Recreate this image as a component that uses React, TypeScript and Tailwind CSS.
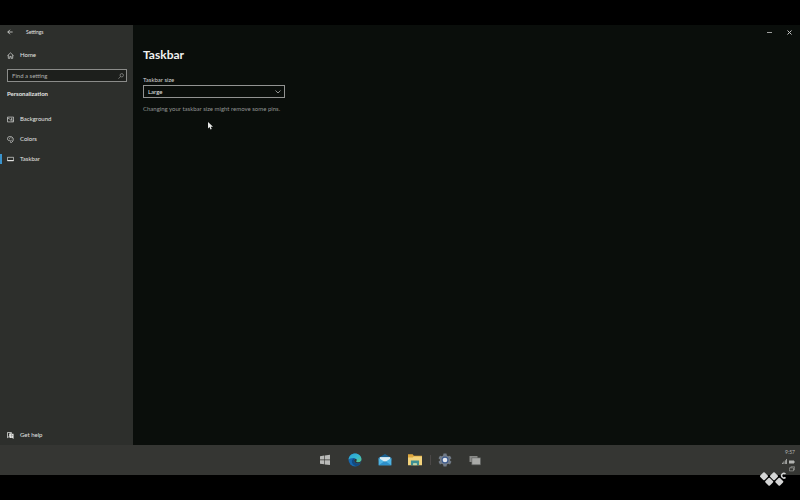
import type { ReactNode } from 'react';
import clsx from 'clsx';

const iconProps = {
  viewBox: '0 0 16 16',
  fill: 'none',
  stroke: 'currentColor',
  strokeWidth: 1.5,
  'aria-hidden': true,
};

const BackIcon = () => (
  <svg {...iconProps} strokeWidth={2} className="size-1.5">
    <path d="M15 8H2M8 2L2 8l6 6" />
  </svg>
);

const HomeIcon = () => (
  <svg {...iconProps} className="size-[7px]">
    <path d="M1 8.500L8 2l7 6.500M3 7v7.500h3.500V10h3v4.500H13V7" />
  </svg>
);

const SearchIcon = () => (
  <svg {...iconProps} className="size-1.5">
    <circle cx="10" cy="6" r="4.500" />
    <path d="M7 9.500L1 15" />
  </svg>
);

const BackgroundIcon = () => (
  <svg {...iconProps} className="size-[7px]">
    <path d="M1 2.500h14v11H1zM1 7l3-2 8 8M9 9l2-1.500 4 4" />
    <circle cx="11" cy="5.500" r=".7" />
  </svg>
);

const ColorsIcon = () => (
  <svg {...iconProps} className="size-[7px]">
    <path d="M2 3c3-3 10-2.500 12 2 1.500 4-1 9-4.500 10-2 .4-2-1.500-1.700-3 .3-2-1-2.500-3-2C1 10.500 0 6 2 3z" />
    <path d="M4.500 5.500h1.500M8 3.800h1.500M10.800 6.500h1.500M10.300 10h1.500" strokeWidth="1.800" />
  </svg>
);

const TaskbarIcon = () => (
  <svg {...iconProps} className="size-[7px]">
    <path d="M1 3h14v8H1z" />
    <path d="M1 10.300h14" strokeWidth="2.200" />
  </svg>
);

const HelpIcon = () => (
  <svg viewBox="0 0 16 16" className="size-[7px]" aria-hidden="true">
    <path d="M1 1h9v3H6v7H4l-3 2z" fill="none" stroke="currentColor" strokeWidth="1.800" />
    <path d="M6 4h9v12l-3-2.500H6z" fill="currentColor" />
    <path d="M9 7.300c.5-1.300 3-1 2.700.4-.2.900-1.300 1-1.300 2.300M10.400 11.300v1" fill="none" stroke="#2d2f2c" strokeWidth="1.200" />
  </svg>
);

const WindowsIcon = () => (
  <svg viewBox="0 0 12 12" className="size-3" aria-hidden="true">
    <path d="M1 2.200L5.200 1.600v4H1zM5.800 1.500L11 .8v4.800H5.800zM1 6.200h4.200v4.100L1 9.700zM5.800 6.200H11v4.900L5.800 10.400z" fill="#b9bab8" />
  </svg>
);

const EdgeIcon = () => (
  <svg viewBox="0 0 24 24" className="size-3.5" aria-hidden="true">
    <defs>
      <linearGradient id="edgeTop" x1="0" y1="0" x2="1" y2="1">
        <stop offset="0" stopColor="#2b9fd6" />
        <stop offset=".55" stopColor="#36b9cf" />
        <stop offset="1" stopColor="#67c873" />
      </linearGradient>
    </defs>
    <circle cx="12" cy="12" r="11" fill="#1768ae" />
    <path d="M1 11C2 4.500 6.500 1 12 1c6.500 0 11 4.500 11 9.500 0 3.500-2.500 5.500-5.500 5.500-2.500 0-4-1-3.500-2 .9-1.800.5-5-3.500-5.500C6 8 2 9.500 1 11z" fill="url(#edgeTop)" />
    <path d="M10 9.500c-3 1-4 4-3 7 1 3.200 4 5.500 7.500 6 3-.5 5.500-2.500 7-5-6 2.500-11.500-.5-11.500-4.500 0-1.500.8-2.500 1.500-3z" fill="#124a82" />
    <path d="M14.500 10.500c.8 1.500 0 2.500-.5 3.500-.5 1 1 2 3.500 2 2 0 3.800-1 4.700-2.300-.2 1.700-.5 2.700-1 3.600-5 2.200-10.500.2-10.700-4.300.1-1.700 1.500-3 4-2.500z" fill="#353633" />
  </svg>
);

const MailIcon = () => (
  <svg viewBox="0 0 24 24" className="size-3.5" aria-hidden="true">
    <path d="M1 8l11-6.500L23 8v5H1z" fill="#1b608f" />
    <path d="M3 7h18v8H3z" fill="#d9edf6" />
    <path d="M1 8.500l11 7 11-7V21H1z" fill="#4eb4e4" />
    <path d="M1 21l9.500-6.500L12 15.500l1.500-1L23 21z" fill="#2d8fca" />
  </svg>
);

const ExplorerIcon = () => (
  <svg viewBox="0 0 24 24" className="size-3.5" aria-hidden="true">
    <path d="M0 2h8l2 2.500h14V11H0z" fill="#dfa83e" />
    <path d="M0 7.500h8l2-1.500h14v15H0z" fill="#f3d37c" />
    <path d="M5 21v-8h14v8h-4v-3H9v3z" fill="#3d8f93" />
    <path d="M9 17.500h6V21H9z" fill="#b8d5b0" />
  </svg>
);

const GearIcon = () => (
  <svg viewBox="0 0 24 24" className="size-3.5" aria-hidden="true">
    <path
      d="M9.500 1h5l.8 3.300 2 1.200 3.300-1 2.500 4.300-2.500 2.300v1.800l2.500 2.300-2.500 4.300-3.300-1-2 1.200-.8 3.300h-5l-.8-3.300-2-1.200-3.300 1L.9 15.200l2.500-2.300v-1.800L.9 8.800l2.500-4.300 3.300 1 2-1.200z"
      fill="#727b87"
    />
    <circle cx="12" cy="12" r="6" fill="#3c5a8e" />
    <circle cx="12" cy="12" r="4" fill="#e6e9ee" />
  </svg>
);

const WindowsStackIcon = () => (
  <svg viewBox="0 0 12 12" className="size-3" aria-hidden="true">
    <path d="M.5 2h8v6h-8z" fill="#8a8b89" />
    <path d="M2.800 3.800h8.700v7H2.800z" fill="#a9aaa8" stroke="#5b5c5a" strokeWidth=".6" />
  </svg>
);

const SignalIcon = () => (
  <svg viewBox="0 0 12 12" className="size-[5px]" aria-hidden="true">
    <path d="M0 12h2V9H0zM3.500 12h2V6h-2zM7 12h2V3H7zM10 12h2V0h-2z" fill="currentColor" />
  </svg>
);

const BatteryIcon = () => (
  <svg viewBox="0 0 12 8" className="h-1 w-1.5" aria-hidden="true">
    <path d="M0 1h10v6H0zM10 3h2v2h-2z" fill="currentColor" />
  </svg>
);

const NotificationIcon = () => (
  <svg {...iconProps} className="size-1.5">
    <path d="M5 5V2h10v8h-3M1 5h11v8H1z" />
  </svg>
);

const WatermarkLogo = () => (
  <svg viewBox="0 0 26 16" className="h-4 w-[26px]" role="img" aria-label="Watermark">
    <path
      d="M4 1.200l3 3-3 3-3-3zM14 1.200l3 3-3 3-3-3zM9.200 6.700l3 3-3 3-3-3zM19.300 6.700l3 3-3 3-3-3z"
      fill="#d4d5d5"
      stroke="#d4d5d5"
      strokeWidth="2"
      strokeLinejoin="round"
    />
    <path d="M25.500 2a2.300 2.300 0 1 0 0 3.400" fill="none" stroke="#d4d5d5" strokeWidth="1.500" />
  </svg>
);

const navItems = [
  { label: 'Background', icon: <BackgroundIcon />, active: false },
  { label: 'Colors', icon: <ColorsIcon />, active: false },
  { label: 'Taskbar', icon: <TaskbarIcon />, active: true },
];

const pinnedApps = [
  { name: 'Start', icon: <WindowsIcon /> },
  { name: 'Microsoft Edge', icon: <EdgeIcon /> },
  { name: 'Mail', icon: <MailIcon /> },
  { name: 'File Explorer', icon: <ExplorerIcon /> },
  { name: 'Settings', icon: <GearIcon />, divider: true },
  { name: 'Task view', icon: <WindowsStackIcon /> },
];

function SidebarLink({ icon, label, active = false }: { icon: ReactNode; label: string; active?: boolean }) {
  return (
    <a
      href="#"
      aria-current={active ? 'page' : undefined}
      className="flex h-5 items-center text-[#e4e5e3]"
    >
      <span className={clsx('mr-[5px] h-2.5 w-0.5', active && 'bg-[#3a93cc]')} />
      {icon}
      <span className="ml-1.5">{label}</span>
    </a>
  );
}

function Sidebar() {
  return (
    <aside className="flex w-[133px] shrink-0 flex-col bg-[#2d2f2c]">
      <div className="flex h-3.5 items-center pl-[7px] text-[5px] text-[#e4e5e3]">
        <button type="button" aria-label="Back">
          <BackIcon />
        </button>
        <span className="ml-[13px]">Settings</span>
      </div>

      <div className="mt-1.5">
        <SidebarLink icon={<HomeIcon />} label="Home" />
      </div>

      <div className="mt-1 mr-1.5 ml-[7px] flex h-[13px] items-center border border-[#8b8c8a] bg-[#1d1f1c] pr-0.5 pl-1">
        <input
          type="text"
          aria-label="Find a setting"
          placeholder="Find a setting"
          className="min-w-0 flex-1 bg-transparent outline-none placeholder:text-[#b0b1af]"
        />
        <span className="text-[#b0b1af]">
          <SearchIcon />
        </span>
      </div>

      <h2 className="mt-[7px] pl-[7px] leading-[10px] font-bold text-[#e4e5e3]">Personalization</h2>

      <nav className="mt-2.5">
        {navItems.map((item) => (
          <SidebarLink key={item.label} {...item} />
        ))}
      </nav>

      <div className="mt-auto">
        <SidebarLink icon={<HelpIcon />} label="Get help" />
      </div>
    </aside>
  );
}

function TaskbarSettings() {
  return (
    <main className="relative flex-1 bg-[#0a0e0b]">
      <div className="flex h-3.5 items-center justify-end gap-[15px] pr-2 text-[#c4c5c4]">
        <button type="button" aria-label="Minimize">
          <svg viewBox="0 0 5 5" className="size-[5px]">
            <path d="M0 2.500h5" stroke="currentColor" strokeWidth=".8" />
          </svg>
        </button>
        <button type="button" aria-label="Close">
          <svg viewBox="0 0 5 5" className="size-[5px]">
            <path d="M.5.5l4 4M4.500.5l-4 4" stroke="currentColor" />
          </svg>
        </button>
      </div>

      <div className="pl-2.5">
        <h1 className="mt-2 text-[12px] leading-4 font-bold text-[#f0f1f0]">Taskbar</h1>
        <label htmlFor="taskbar-size" className="mt-3 block leading-[10px] text-[#d6d7d6]">
          Taskbar size
        </label>
        <div className="relative w-[142px]">
          <select
            id="taskbar-size"
            defaultValue="large"
            className="block h-[13px] w-full appearance-none border border-[#929392] bg-[#0a0e0b] pl-1 text-[#e6e7e6]"
          >
            <option value="small">Small</option>
            <option value="medium">Medium</option>
            <option value="large">Large</option>
          </select>
          <svg viewBox="0 0 6 4" className="pointer-events-none absolute top-[5px] right-1 h-1 w-1.5">
            <path d="M.5.5L3 3 5.500.5" fill="none" stroke="#b4b5b4" strokeWidth=".8" />
          </svg>
        </div>
        <p className="mt-1.5 leading-[10px] text-[#929593]">Changing your taskbar size might remove some pins.</p>
      </div>

      {/* mouse pointer */}
      <svg viewBox="0 0 10 16" className="pointer-events-none absolute top-[97px] left-[75px] h-2 w-[5px]">
        <path d="M0 0v13l3-2.800L5 15l2.500-1-2-4.500H10z" fill="#e8e9e8" />
      </svg>
    </main>
  );
}

function DesktopTaskbar() {
  return (
    <footer className="relative flex h-[30px] shrink-0 items-center justify-center bg-[#353633]">
      {pinnedApps.map((app) => (
        <button
          key={app.name}
          type="button"
          aria-label={app.name}
          className="relative flex h-full w-[30px] items-center justify-center"
        >
          {app.divider && <span className="absolute left-0 h-2.5 w-px bg-[#4b4847]" />}
          {app.icon}
        </button>
      ))}

      <div className="absolute top-0.5 right-[5px] flex flex-col items-end gap-0.5 text-[#b4b5b3]">
        <time className="text-[5px] leading-[10px]">9:57</time>
        <div className="flex items-center gap-0.5">
          <SignalIcon />
          <BatteryIcon />
        </div>
        <NotificationIcon />
      </div>

      <div className="absolute top-[27px] right-3.5">
        <WatermarkLogo />
      </div>
    </footer>
  );
}

export default function App() {
  return (
    <div className="flex h-screen flex-col bg-black py-[25px] font-['Lato','Noto_Sans',sans-serif] text-[6px] leading-[10px]">
      <div className="flex min-h-0 flex-1">
        <Sidebar />
        <TaskbarSettings />
      </div>
      <DesktopTaskbar />
    </div>
  );
}
